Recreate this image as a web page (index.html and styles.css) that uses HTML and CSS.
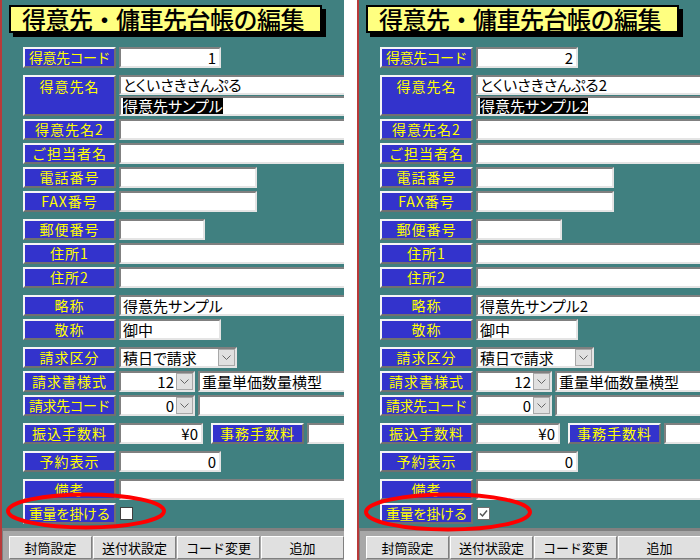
FILE: index.html
```html
<!DOCTYPE html>
<html lang="ja">
<head>
  <meta charset="UTF-8">
  <title>得意先・傭車先台帳の編集</title>
  <link rel="stylesheet" href="styles.css">
</head>
<body>
  <div class="screen">
    <section class="panel">
      <div class="title">得意先・傭車先台帳の編集</div>
      <div class="form">
        <div class="row"><div class="lbl tight">得意先コード</div><div class="fld num f-code">1</div></div>
        <div class="row tall sp">
          <div class="lbl">得意先名</div>
          <div class="stack">
            <div class="fld f-wide">とくいさきさんぷる</div>
            <div class="fld f-wide"><span class="hl">得意先サンプル</span></div>
          </div>
        </div>
        <div class="row"><div class="lbl">得意先名2</div><div class="fld f-wide"></div></div>
        <div class="row"><div class="lbl">ご担当者名</div><div class="fld f-wide"></div></div>
        <div class="row"><div class="lbl">電話番号</div><div class="fld f-tel"></div></div>
        <div class="row"><div class="lbl">FAX番号</div><div class="fld f-tel"></div></div>
        <div class="row sp"><div class="lbl">郵便番号</div><div class="fld f-zip"></div></div>
        <div class="row"><div class="lbl">住所1</div><div class="fld f-wide"></div></div>
        <div class="row"><div class="lbl">住所2</div><div class="fld f-wide"></div></div>
        <div class="row sp"><div class="lbl">略称</div><div class="fld f-wide">得意先サンプル</div></div>
        <div class="row"><div class="lbl">敬称</div><div class="fld f-code">御中</div></div>
        <div class="row sp">
          <div class="lbl">請求区分</div>
          <div class="fld sel f-kbn"><span class="val">積日で請求</span><span class="drop"><svg width="9" height="5" viewBox="0 0 9 5"><polyline points="0.5,0.5 4.5,4.5 8.5,0.5" fill="none" stroke="#666" stroke-width="1"/></svg></span></div>
        </div>
        <div class="row">
          <div class="lbl">請求書様式</div>
          <div class="fld sel f-small"><span class="val num">12</span><span class="drop"><svg width="9" height="5" viewBox="0 0 9 5"><polyline points="0.5,0.5 4.5,4.5 8.5,0.5" fill="none" stroke="#666" stroke-width="1"/></svg></span></div>
          <div class="fld f-wide">重量単価数量横型</div>
        </div>
        <div class="row">
          <div class="lbl tight">請求先コード</div>
          <div class="fld sel f-small"><span class="val num">0</span><span class="drop"><svg width="9" height="5" viewBox="0 0 9 5"><polyline points="0.5,0.5 4.5,4.5 8.5,0.5" fill="none" stroke="#666" stroke-width="1"/></svg></span></div>
          <div class="fld f-wide"></div>
        </div>
        <div class="row sp">
          <div class="lbl">振込手数料</div>
          <div class="fld num f-fee">¥0</div>
          <div class="lbl after">事務手数料</div>
          <div class="fld f-wide"></div>
        </div>
        <div class="row sp"><div class="lbl">予約表示</div><div class="fld num f-code">0</div></div>
        <div class="row sp"><div class="lbl">備考</div><div class="fld f-wide"></div></div>
        <div class="row"><div class="lbl tight">重量を掛ける</div><div class="chk"></div></div>
      </div>
      <svg class="mark" width="162" height="38" viewBox="0 0 162 38"><ellipse cx="81" cy="19" rx="78" ry="16.5" fill="none" stroke="#f00" stroke-width="4"/></svg>
      <div class="foot">
        <div class="btns">
          <div class="btn">封筒設定</div>
          <div class="btn">送付状設定</div>
          <div class="btn">コード変更</div>
          <div class="btn">追加</div>
        </div>
      </div>
    </section>

    <section class="panel panel-right">
      <div class="title">得意先・傭車先台帳の編集</div>
      <div class="form">
        <div class="row"><div class="lbl tight">得意先コード</div><div class="fld num f-code">2</div></div>
        <div class="row tall sp">
          <div class="lbl">得意先名</div>
          <div class="stack">
            <div class="fld f-wide">とくいさきさんぷる2</div>
            <div class="fld f-wide"><span class="hl">得意先サンプル2</span></div>
          </div>
        </div>
        <div class="row"><div class="lbl">得意先名2</div><div class="fld f-wide"></div></div>
        <div class="row"><div class="lbl">ご担当者名</div><div class="fld f-wide"></div></div>
        <div class="row"><div class="lbl">電話番号</div><div class="fld f-tel"></div></div>
        <div class="row"><div class="lbl">FAX番号</div><div class="fld f-tel"></div></div>
        <div class="row sp"><div class="lbl">郵便番号</div><div class="fld f-zip"></div></div>
        <div class="row"><div class="lbl">住所1</div><div class="fld f-wide"></div></div>
        <div class="row"><div class="lbl">住所2</div><div class="fld f-wide"></div></div>
        <div class="row sp"><div class="lbl">略称</div><div class="fld f-wide">得意先サンプル2</div></div>
        <div class="row"><div class="lbl">敬称</div><div class="fld f-code">御中</div></div>
        <div class="row sp">
          <div class="lbl">請求区分</div>
          <div class="fld sel f-kbn"><span class="val">積日で請求</span><span class="drop"><svg width="9" height="5" viewBox="0 0 9 5"><polyline points="0.5,0.5 4.5,4.5 8.5,0.5" fill="none" stroke="#666" stroke-width="1"/></svg></span></div>
        </div>
        <div class="row">
          <div class="lbl">請求書様式</div>
          <div class="fld sel f-small"><span class="val num">12</span><span class="drop"><svg width="9" height="5" viewBox="0 0 9 5"><polyline points="0.5,0.5 4.5,4.5 8.5,0.5" fill="none" stroke="#666" stroke-width="1"/></svg></span></div>
          <div class="fld f-wide">重量単価数量横型</div>
        </div>
        <div class="row">
          <div class="lbl tight">請求先コード</div>
          <div class="fld sel f-small"><span class="val num">0</span><span class="drop"><svg width="9" height="5" viewBox="0 0 9 5"><polyline points="0.5,0.5 4.5,4.5 8.5,0.5" fill="none" stroke="#666" stroke-width="1"/></svg></span></div>
          <div class="fld f-wide"></div>
        </div>
        <div class="row sp">
          <div class="lbl">振込手数料</div>
          <div class="fld num f-fee">¥0</div>
          <div class="lbl after">事務手数料</div>
          <div class="fld f-wide"></div>
        </div>
        <div class="row sp"><div class="lbl">予約表示</div><div class="fld num f-code">0</div></div>
        <div class="row sp"><div class="lbl">備考</div><div class="fld f-wide"></div></div>
        <div class="row">
          <div class="lbl tight">重量を掛ける</div>
          <div class="chk checked"><svg width="11" height="11" viewBox="0 0 11 11"><polyline points="2,5.5 4.5,8 9,2.5" fill="none" stroke="#555" stroke-width="1.5"/></svg></div>
        </div>
      </div>
      <svg class="mark mark-right" width="170" height="40" viewBox="0 0 170 40"><ellipse cx="85" cy="20" rx="82" ry="17.5" fill="none" stroke="#f00" stroke-width="4"/></svg>
      <div class="foot">
        <div class="btns">
          <div class="btn">封筒設定</div>
          <div class="btn">送付状設定</div>
          <div class="btn">コード変更</div>
          <div class="btn">追加</div>
        </div>
      </div>
    </section>
  </div>
</body>
</html>
```

FILE: styles.css
```css
body {
  margin: 0;
  background: #fff;
  font-family: "Noto Sans CJK JP", "Liberation Sans", sans-serif;
  color: #000;
}
.screen {
  display: flex;
  gap: 13px;
  width: 700px;
  height: 560px;
  overflow: hidden;
}
.panel {
  position: relative;
  flex: 0 0 auto;
  width: 344px;
  height: 560px;
  box-sizing: border-box;
  border-left: 2px solid #b83a3a;
  background: #408080;
  overflow: hidden;
  display: flex;
  flex-direction: column;
  padding-top: 5px;
}
.panel-right {
  width: 343px;
}
.title {
  align-self: flex-start;
  margin-left: 7px;
  width: 313px;
  height: 28px;
  box-sizing: border-box;
  border: 2px solid #000;
  background: #ffff80;
  box-shadow: 4px 4px 0 #000;
  padding-left: 11px;
  font-size: 24px;
  line-height: 24px;
  font-weight: 500;
  letter-spacing: -0.5px;
  white-space: nowrap;
}
.form {
  display: flex;
  flex-direction: column;
  gap: 3px;
  margin-top: 14px;
  padding-left: 21px;
}
.row {
  display: flex;
  gap: 3px;
  height: 21px;
  flex: 0 0 auto;
}
.row.sp {
  margin-top: 4px;
}
.row.tall {
  height: 41px;
}
.lbl {
  flex: 0 0 93px;
  height: 21px;
  box-sizing: border-box;
  background: #3333cc;
  color: #ffff00;
  border: 2px solid;
  border-color: #f4f4f4 #707070 #707070 #f4f4f4;
  font-size: 14px;
  line-height: 17px;
  text-align: center;
  letter-spacing: 1px;
  white-space: nowrap;
}
.lbl.tight {
  letter-spacing: -0.5px;
}
.row.tall .lbl {
  height: 41px;
  padding-top: 1px;
}
.lbl.after {
  margin-left: 5px;
}
.stack {
  display: flex;
  flex-direction: column;
  gap: 1px;
}
.fld {
  flex: 0 0 auto;
  height: 21px;
  box-sizing: border-box;
  background: #fff;
  border: 2px solid;
  border-color: #808080 #e4e4e4 #e4e4e4 #808080;
  padding: 0 2px;
  font-size: 15px;
  line-height: 17px;
  white-space: nowrap;
  overflow: hidden;
  font-feature-settings: "palt";
}
.stack .fld {
  height: 20px;
  line-height: 16px;
}
.num {
  text-align: right;
  padding-right: 3px;
}
.hl {
  background: #000;
  color: #fff;
}
.f-code { width: 102px; }
.f-wide { width: 330px; }
.f-tel { width: 138px; }
.f-zip { width: 86px; }
.f-fee { width: 84px; }
.f-kbn { width: 118px; }
.f-small { width: 76px; }
.sel {
  display: flex;
  padding-right: 0;
}
.sel .val {
  flex: 1;
}
.sel .val.num {
  padding-right: 2px;
}
.drop {
  flex: 0 0 17px;
  height: 17px;
  box-sizing: border-box;
  background: #e0e0e0;
  border: 1px solid #a8a8a8;
  display: flex;
  align-items: center;
  justify-content: center;
}
.chk {
  width: 13px;
  height: 13px;
  box-sizing: border-box;
  margin: 4px 0 0 1px;
  background: #fff;
  border: 1px solid #404040;
  display: flex;
  align-items: center;
  justify-content: center;
}
.chk.checked {
  border-color: #707070;
}
.mark {
  position: absolute;
  left: 3px;
  top: 492px;
}
.mark-right {
  left: 4px;
}
.foot {
  margin-top: auto;
  height: 32px;
  box-sizing: border-box;
  background: #808080;
  padding: 3px 0 0 1px;
}
.btns {
  display: flex;
  gap: 1px;
  height: 100%;
  box-sizing: border-box;
  background: #a8a8a8;
  padding: 5px 0 0 6px;
}
.btn {
  flex: 0 0 83px;
  height: 23px;
  box-sizing: border-box;
  background: #e0e0e0;
  border: 1px solid;
  border-color: #fff #808080 #808080 #fff;
  font-size: 13px;
  line-height: 21px;
  text-align: center;
  white-space: nowrap;
}
```
